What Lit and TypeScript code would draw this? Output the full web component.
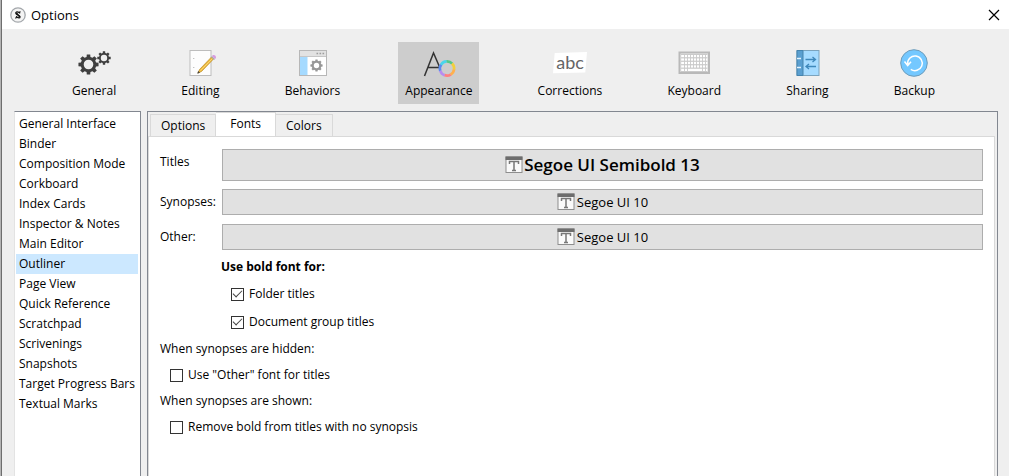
import { LitElement, html, svg, css } from "lit";
import { customElement, state } from "lit/decorators.js";
import { classMap } from "lit/directives/class-map.js";

/** Closed outline of a cog with eight teeth around (cx, cy). */
function cog(cx: number, cy: number, outer: number, root: number): string {
  const points: string[] = [];
  for (let i = 0; i < 8; i++) {
    const a = (i * Math.PI) / 4;
    for (const [da, r] of [[-0.25, root], [-0.17, outer], [0.17, outer], [0.25, root]]) {
      points.push(`${(cx + r * Math.sin(a + da)).toFixed(2)},${(cy - r * Math.cos(a + da)).toFixed(2)}`);
    }
  }
  return `M${points.join("L")}Z`;
}

function hole(cx: number, cy: number, r: number): string {
  return `M${cx - r},${cy}a${r},${r} 0 1,0 ${2 * r},0a${r},${r} 0 1,0 ${-2 * r},0Z`;
}

const ringColors = ["#54c98a", "#f2cf3c", "#ffb04d", "#ff8080", "#b78df0", "#5b8cf0", "#48d5ec"];

function ring() {
  const step = (2 * Math.PI) / ringColors.length;
  return ringColors.map((color, i) => {
    const a = i * step - 0.1;
    const b = a + step + 0.03;
    const x1 = 26 + 7.1 * Math.sin(a), y1 = 21.5 - 7.1 * Math.cos(a);
    const x2 = 26 + 7.1 * Math.sin(b), y2 = 21.5 - 7.1 * Math.cos(b);
    return svg`<path d="M${x1},${y1}A7.1,7.1 0 0,1 ${x2},${y2}" fill="none" stroke=${color} stroke-width="2.7"/>`;
  });
}

const icons = {
  General: svg`
    <path fill="#3f3f3f" fill-rule="evenodd" d="${cog(12.5, 17.5, 10.2, 7.8)}${hole(12.5, 17.5, 4.8)}"/>
    <path fill="#3f3f3f" fill-rule="evenodd" d="${cog(28, 11, 6.8, 5.1)}${hole(28, 11, 3.2)}"/>`,
  Editing: svg`
    <rect x="8" y="3.5" width="21" height="25" fill="#fdfdfd" stroke="#bdbdbd"/>
    <path d="M11 11.5h1.4M11 20.5h1.4" stroke="#c4c4c4"/>
    <path d="M16 26L17.500 22.500L29.500 10L31.500 12L19.500 24.500Z" fill="#efb93a" stroke="#b98d2d" stroke-width=".7"/>
    <path d="M18.500 23.500L30.500 11.500" stroke="#f9dc83" stroke-width=".8"/>
    <path d="M15.200 26.800L16.200 24L18 25.800Z" fill="#4b4338"/>
    <path d="M29 10L30 9L33 12L32 13Z" fill="#a9a9a9"/>
    <path d="M30 9L31 8Q34 7.500 34 11L33 12Z" fill="#d79be0"/>`,
  Behaviors: svg`
    <rect x="5.500" y="3.500" width="27" height="25" fill="#fff" stroke="#b7b7b7"/>
    <path d="M6 4h26v5h-26Z" fill="#e2e2e2"/>
    <path d="M6 9.500h26" stroke="#c6c6c6"/>
    <path d="M6 10h7.500v18h-7.500Z" fill="#a5daff"/>
    <path d="M22.500 6.500h1.600M25.500 6.500h1.600M28.500 6.500h1.600" stroke="#9d9d9d" stroke-width="1.400"/>
    <path fill="#979797" fill-rule="evenodd" d="${cog(22.5, 18.5, 6.2, 4.9)}${hole(22.5, 18.5, 2.7)}"/>`,
  Appearance: svg`
    <path d="M3.500 29L12.500 6L18.800 20.500M6.800 20.500H18.500" fill="none" stroke="#333" stroke-width="1.500"/>
    ${ring()}`,
  Corrections: svg`
    <path d="M1 26.300L2.700 6L35 5L33.300 25.600Z" fill="#fff"/>
    <text class="abc" x="18" y="22" text-anchor="middle">abc</text>`,
  Keyboard: svg`
    <rect x="3.500" y="5.500" width="29.500" height="20.500" fill="#ececec" stroke="#b9b9b9" stroke-width="2"/>
    <path d="M5.500 9H31M5.500 12.500H31M5.500 16H31M5.500 19.500H31M5.500 23H31" stroke="#fff" stroke-width="2"/>
    <path d="M5 7.500H31.500M5 10.800H31.500M5 14.300H31.500M5 17.700H31.500M5 21.200H31.500M5 24.500H31.500" stroke="#c6c6c6" stroke-width=".9"/>
    <path d="M8.500 8V24M11.500 8V24M14.500 8V21M17.500 8V21M20.500 8V21M23.500 8V21M26.500 8V24M29.500 8V24" stroke="#cacaca" stroke-width=".9"/>`,
  Sharing: svg`
    <rect x="8" y="3.500" width="22" height="25" fill="#a6dbff" stroke="#7ba3bd"/>
    <path d="M8 3.500h6v25h-6Z" fill="#5a9fd0" stroke="#4583ad"/>
    <path d="M8 11.500h4M8 20.500h4" stroke="#e4f3fd" stroke-width="1.400"/>
    <path d="M16.500 12.500H26.500M23.500 10L26.500 12.500L23.500 15M27 19.500H17M20 17L17 19.500L20 22" fill="none" stroke="#3f88bb" stroke-width="1.300"/>`,
  Backup: svg`
    <circle cx="18" cy="16" r="13.300" fill="#74c8ff" stroke="#6e9cba"/>
    <path d="M14.800 22.300A7.300 7.300 0 1 0 11.700 17M8.500 14.500L11.700 18.500L15 14.800" fill="none" stroke="#fff" stroke-width="1.500"/>`,
};

type Page = keyof typeof icons;

const sections = [
  "General Interface", "Binder", "Composition Mode", "Corkboard", "Index Cards",
  "Inspector & Notes", "Main Editor", "Outliner", "Page View", "Quick Reference",
  "Scratchpad", "Scrivenings", "Snapshots", "Target Progress Bars", "Textual Marks",
];

const fontRows = [
  { id: "titles", label: "Titles", font: "Segoe UI Semibold 13", large: true },
  { id: "synopses", label: "Synopses:", font: "Segoe UI 10", large: false },
  { id: "other", label: "Other:", font: "Segoe UI 10", large: false },
];

@customElement("app-root")
export class AppRoot extends LitElement {
  static styles = css`
    :host {
      display: flex;
      flex-direction: column;
      box-sizing: border-box;
      min-height: 100vh;
      border-left: 1px solid #b4b4b4;
      box-shadow: inset 1px 0 #6e6e6e;
      padding-left: 1px;
      background: #efefef;
      color: #000;
      font: 12px/20px "Open Sans", "Noto Sans", sans-serif;
    }
    * { box-sizing: border-box; }
    button { font: inherit; color: inherit; margin: 0; padding: 0; border: 0; background: none; border-radius: 0; }
    svg { display: block; }
    .titlebar { display: flex; align-items: center; height: 29px; padding: 0 9px 0 8px; background: #fff; }
    .title { flex: 1; margin: 0; padding: 0 5px; font-size: 13px; line-height: 20px; font-weight: 400; }
    .toolbar { display: flex; justify-content: space-between; padding: 13px 67px 7px 63px; }
    .tool { display: flex; flex-direction: column; align-items: center; height: 62px; padding: 5px 7px 0; }
    .tool.active { background: #cdcdcd; }
    .abc { font: 18px Lato, sans-serif; fill: #666; }
    .body { flex: 1; display: flex; gap: 6px; padding: 0 11px 0 12px; }
    .sections { flex: 0 0 127px; padding: 2px 2px 0 1px; display: flex; flex-direction: column;
      background: #fff; border: 1px solid #828790; border-left-color: #e3e3e3; border-bottom: 0; }
    .section { height: 20px; padding: 0 3px; text-align: left; white-space: nowrap; }
    .section.active { background: #cce8ff; }
    .panel { flex: 1; display: flex; flex-direction: column; padding: 0 2px 0 0; border: 1px solid #828790; border-bottom: 0; }
    .tabs { display: flex; align-items: flex-end; height: 24px; padding-left: 2px; }
    .tab { height: 22px; padding: 0 10px; border: 1px solid #d9d9d9; border-bottom: 0; }
    .tab + .tab { border-left: 0; }
    .tab.active { height: 25px; padding: 0 14px 2px; margin-bottom: -1px; background: #fff; }
    .page { flex: 1; padding: 12px 11px 0; background: #fff; border: 1px solid #d9d9d9; border-bottom: 0; }
    .fonts { display: grid; grid-template-columns: 62px 1fr; grid-template-rows: 40px 35px 30px; align-items: start; }
    .label { display: flex; align-items: center; height: 26px; white-space: nowrap; }
    .font { display: flex; align-items: center; justify-content: center; height: 26px; font-size: 13px; background: #e1e1e1; border: 1px solid #adadad; }
    .font span { padding-left: 2px; }
    .font.large { height: 32px; font-size: 17px; font-weight: 600; }
    .font.large span { padding-left: 1px; }
    .row { display: flex; align-items: center; height: 26px; margin: 0; font-size: 12px; font-weight: 400; }
    .row.bold { padding-left: 61px; font-weight: 700; }
    .row.nested { padding-left: 71px; height: 28px; }
    .row.check { gap: 5px; }
    .row.indent { padding-left: 10px; }
    .box { appearance: none; width: 13px; height: 13px; margin: 0; border: 1px solid #333; background: #fff; display: grid; place-items: center; }
    .box:checked::before { content: ""; width: 8px; height: 4px; margin-top: -3px; border: solid #444; border-width: 0 0 1px 1px; transform: rotate(-45deg); }
  `;

  @state() private page: Page = "Appearance";
  @state() private section = "Outliner";
  @state() private tab = "Fonts";

  private checkRow(label: string, checked: boolean, place: string) {
    return html`<label class="row check ${place}"><input class="box" type="checkbox" .checked=${checked} /><span>${label}</span></label>`;
  }

  private fontIcon() {
    return html`<svg width="18" height="18" viewBox="0 0 18 18" aria-hidden="true">
      <rect x="1" y="1" width="16" height="15.500" fill="#fafafa" stroke="#8e8e8e" />
      <path d="M.5 .5h17v3.500h-17Z" fill="#6d6d6d" />
      <path d="M4.500 8V5.500H13.500V8M9 5.500V14.500M7 14.500H11" fill="none" stroke="#777" stroke-width="1.500" />
    </svg>`;
  }

  render() {
    return html`
      <header class="titlebar">
        <svg width="16" height="16" viewBox="0 0 16 16" aria-hidden="true">
          <circle cx="8" cy="8" r="7.200" fill="#f4f4f4" stroke="#a3a7ab" stroke-width="1.300" />
          <path d="M10.500 5.200Q9.500 4.300 9.500 5.800Q7 4 5.800 5.500Q5.500 7 8 8Q10.800 9 9.800 10.800Q8.500 11.300 6.500 9.800Q6.300 11.300 5.300 10.800" fill="none" stroke="#111" stroke-width="1.200" />
          <path d="M6.500 6L9.800 10" stroke="#111" stroke-width="1.400" />
        </svg>
        <h1 class="title">Options</h1>
        <button aria-label="Close">
          <svg width="12" height="12" viewBox="0 0 12 12"><path d="M1 1L11 11M11 1L1 11" stroke="#000" stroke-width="1.200" /></svg>
        </button>
      </header>
      <nav class="toolbar">
        ${(Object.keys(icons) as Page[]).map((name) => html`
          <button class=${classMap({ tool: true, active: name === this.page })} @click=${() => (this.page = name)}>
            <svg width="36" height="34" viewBox="0 0 36 34" aria-hidden="true">${icons[name]}</svg>
            <span>${name}</span>
          </button>`)}
      </nav>
      <div class="body">
        <nav class="sections">
          ${sections.map((name) => html`
            <button class=${classMap({ section: true, active: name === this.section })} @click=${() => (this.section = name)}>${name}</button>`)}
        </nav>
        <main class="panel">
          <div class="tabs" role="tablist">
            ${["Options", "Fonts", "Colors"].map((name) => html`
              <button role="tab" aria-selected=${name === this.tab} class=${classMap({ tab: true, active: name === this.tab })}
                @click=${() => (this.tab = name)}>${name}</button>`)}
          </div>
          <div class="page" role="tabpanel">
            <div class="fonts">
              ${fontRows.map((row) => html`
                <label class="label" for=${row.id}>${row.label}</label>
                <button id=${row.id} class=${classMap({ font: true, large: row.large })}>${this.fontIcon()}<span>${row.font}</span></button>`)}
            </div>
            <h2 class="row bold">Use bold font for:</h2>
            ${this.checkRow("Folder titles", true, "nested")}
            ${this.checkRow("Document group titles", true, "nested")}
            <h2 class="row">When synopses are hidden:</h2>
            ${this.checkRow('Use "Other" font for titles', false, "indent")}
            <h2 class="row">When synopses are shown:</h2>
            ${this.checkRow("Remove bold from titles with no synopsis", false, "indent")}
          </div>
        </main>
      </div>`;
  }
}
